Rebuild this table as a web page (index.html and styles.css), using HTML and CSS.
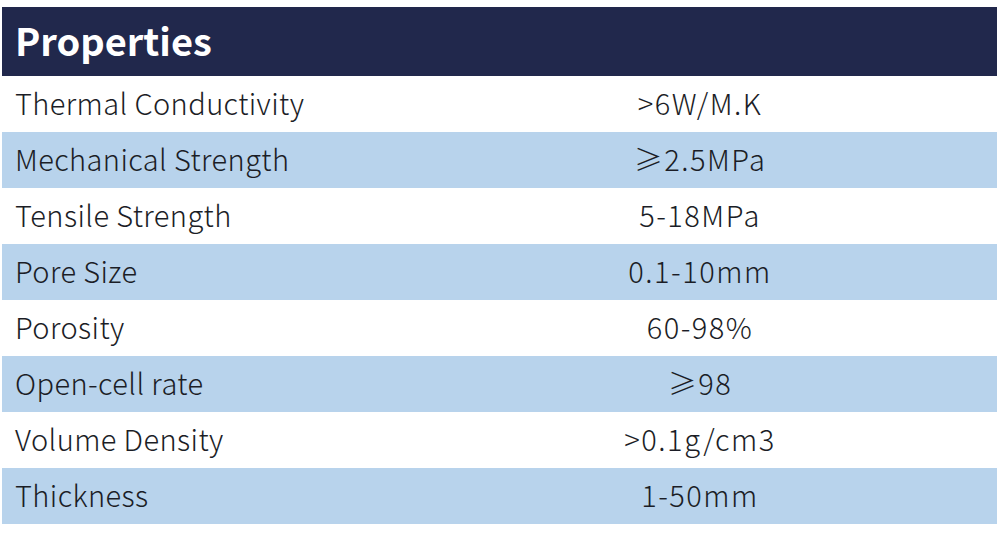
FILE: index.html
```html
<!DOCTYPE html>
<html>
<head>
<meta charset="utf-8">
<link rel="stylesheet" href="styles.css">
</head>
<body>
<div class="table">
  <div class="head">Properties</div>
  <div class="row"><div class="label">Thermal Conductivity</div><div class="value">&gt;6W/M.K</div></div>
  <div class="row alt"><div class="label">Mechanical Strength</div><div class="value">≥2.5MPa</div></div>
  <div class="row"><div class="label">Tensile Strength</div><div class="value">5-18MPa</div></div>
  <div class="row alt"><div class="label">Pore Size</div><div class="value">0.1-10mm</div></div>
  <div class="row"><div class="label">Porosity</div><div class="value">60-98%</div></div>
  <div class="row alt"><div class="label">Open-cell rate</div><div class="value">≥98</div></div>
  <div class="row"><div class="label">Volume Density</div><div class="value">&gt;0.1g/cm3</div></div>
  <div class="row alt"><div class="label">Thickness</div><div class="value">1-50mm</div></div>
</div>
</body>
</html>
```
FILE: styles.css
```css
html, body {
  margin: 0;
  padding: 0;
  background: #ffffff;
}
.table {
  margin: 7px 0 0 2px;
  width: 995px;
  font-family: "Noto Sans CJK SC", "Noto Sans", sans-serif;
  color: #1b1d26;
}
.head {
  height: 69px;
  background: #21284c;
  color: #ffffff;
  font-weight: 700;
  font-size: 38px;
  line-height: 66px;
  padding-left: 13px;
  box-sizing: border-box;
}
.row {
  display: grid;
  grid-template-columns: 401px 1fr;
  height: 56px;
  align-items: center;
  font-size: 29px;
  font-weight: 300;
}
.row.alt {
  background: #b8d3ec;
}
.label {
  padding-left: 13px;
  padding-bottom: 4px;
  letter-spacing: 0.4px;
}
.value {
  text-align: center;
  padding-bottom: 4px;
  letter-spacing: 1.5px;
}
```
